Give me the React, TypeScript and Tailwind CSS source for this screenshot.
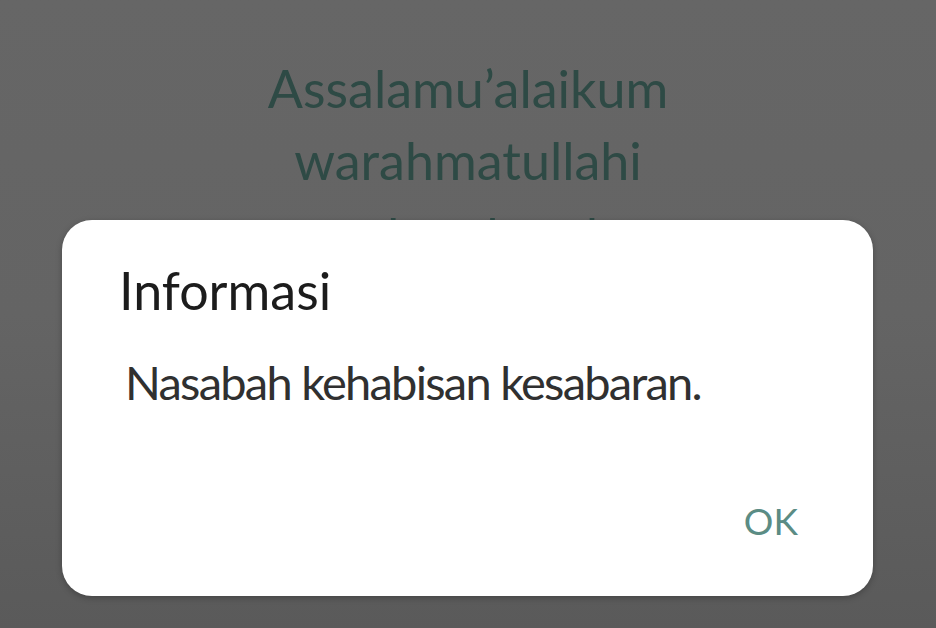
import React from 'react';

export default function App() {
  return (
    <div
      className="relative w-[936px] h-[628px] overflow-hidden bg-gradient-to-b from-[#666666] via-[#646464] to-[#5a5a5a]"
      style={{ fontFamily: 'Lato, "Noto Sans", sans-serif' }}
    >
      {/* greeting behind the overlay */}
      <div className="flex flex-col items-center pt-[52px] text-[#2e4a45] text-[52px] leading-[72px]">
        <span>Assalamu’alaikum</span>
        <span>warahmatullahi</span>
        <span className="mt-[4px]">wabarakatuh</span>
      </div>

      {/* dialog */}
      <div className="absolute left-[62px] top-[220px] w-[811px] h-[376px] bg-white rounded-[30px] shadow-[0_2px_6px_rgba(0,0,0,0.25)] flex flex-col">
        <div className="pl-[57px] pt-[40px] text-[#1c1c1c] text-[52px] leading-[60px]">Informasi</div>
        <div className="pl-[63px] pt-[34px] text-[#303030] text-[47px] leading-[56px] tracking-[-1.75px]">
          Nasabah kehabisan kesabaran.
        </div>
        <div className="mt-auto flex justify-end pr-[75px] pb-[53px]">
          <span className="text-[#5b8c84] text-[37px] leading-[44px]">OK</span>
        </div>
      </div>
    </div>
  );
}
